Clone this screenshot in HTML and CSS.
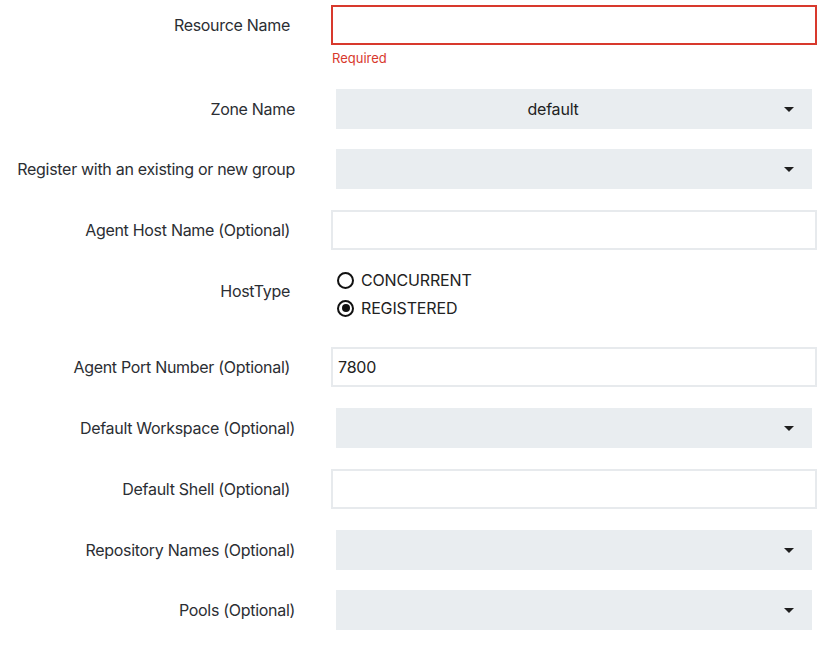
FILE: index.html
```html
<!DOCTYPE html>
<html>
<head>
<meta charset="utf-8">
<link rel="stylesheet" href="styles.css">
</head>
<body>
<form class="form">
  <div class="row row-input">
    <label class="label">Resource Name</label>
    <div class="field">
      <input class="text-input invalid" type="text">
      <div class="error">Required</div>
    </div>
  </div>
  <div class="row row-select">
    <label class="label">Zone Name</label>
    <div class="field">
      <div class="select"><span class="select-value">default</span><span class="caret"></span></div>
    </div>
  </div>
  <div class="row row-select">
    <label class="label">Register with an existing or new group</label>
    <div class="field">
      <div class="select"><span class="select-value"></span><span class="caret"></span></div>
    </div>
  </div>
  <div class="row row-input">
    <label class="label">Agent Host Name (Optional)</label>
    <div class="field"><input class="text-input" type="text"></div>
  </div>
  <div class="row row-radio">
    <label class="label">HostType</label>
    <div class="field radios">
      <div class="radio"><span class="dot"></span><span>CONCURRENT</span></div>
      <div class="radio"><span class="dot checked"></span><span>REGISTERED</span></div>
    </div>
  </div>
  <div class="row row-input">
    <label class="label">Agent Port Number (Optional)</label>
    <div class="field"><input class="text-input" type="text" value="7800"></div>
  </div>
  <div class="row row-select">
    <label class="label">Default Workspace (Optional)</label>
    <div class="field">
      <div class="select"><span class="select-value"></span><span class="caret"></span></div>
    </div>
  </div>
  <div class="row row-input">
    <label class="label">Default Shell (Optional)</label>
    <div class="field"><input class="text-input" type="text"></div>
  </div>
  <div class="row row-select">
    <label class="label">Repository Names (Optional)</label>
    <div class="field">
      <div class="select"><span class="select-value"></span><span class="caret"></span></div>
    </div>
  </div>
  <div class="row row-select">
    <label class="label">Pools (Optional)</label>
    <div class="field">
      <div class="select"><span class="select-value"></span><span class="caret"></span></div>
    </div>
  </div>
</form>
</body>
</html>
```
FILE: styles.css
```css
* { box-sizing: border-box; }
html, body { margin: 0; padding: 0; background: #fff; }
body {
  font-family: Inter, "Noto Sans", "Liberation Sans", sans-serif;
  font-size: 16px;
  color: #2b2e33;
}
.form {
  display: flex;
  flex-direction: column;
  gap: 21px;
  padding: 5px 6px 0 0;
}
.row {
  display: flex;
  align-items: flex-start;
  gap: 41px;
}
.row-select { padding: 0 5px; }
.row-select + .row-select { margin-top: -1px; }
.label {
  flex: 0 0 290px;
  text-align: right;
  line-height: 40px;
  white-space: nowrap;
  letter-spacing: -0.3px;
}
.field { flex: 1; min-width: 0; }
.text-input {
  display: block;
  width: 100%;
  height: 40px;
  border: 2px solid #e7eaed;
  border-radius: 0;
  padding: 0 5px;
  font: inherit;
  letter-spacing: -0.2px;
  color: #222;
  outline: none;
  background: #fff;
}
.text-input.invalid { border-color: #d8392d; }
.error {
  height: 23px;
  padding-top: 5px;
  font-size: 13px;
  line-height: 16px;
  color: #d8392d;
  padding-left: 1px;
}
.select {
  display: flex;
  align-items: center;
  height: 40px;
  background: #e9edf0;
}
.select-value {
  flex: 1;
  text-align: center;
  color: #222;
  letter-spacing: -0.2px;
}
.caret {
  flex: 0 0 42px;
  height: 40px;
  position: relative;
}
.caret::after {
  content: "";
  position: absolute;
  left: 14px;
  top: 18px;
  border-left: 5px solid transparent;
  border-right: 5px solid transparent;
  border-top: 5px solid #1f1f1f;
}
.row-radio .label {
  line-height: 20px;
  padding-top: 10px;
}
.radios {
  display: flex;
  flex-direction: column;
  gap: 8px;
  margin-top: -1px;
  padding-bottom: 8px;
}
.radio {
  display: flex;
  align-items: center;
  gap: 7px;
  height: 20px;
  padding-left: 6px;
  color: #222;
  letter-spacing: -0.15px;
}
.dot {
  width: 17px;
  height: 17px;
  border: 2px solid #111;
  border-radius: 50%;
  position: relative;
  flex: none;
}
.dot.checked::after {
  content: "";
  position: absolute;
  left: 2.5px;
  top: 2.5px;
  width: 8px;
  height: 8px;
  border-radius: 50%;
  background: #111;
}
```
